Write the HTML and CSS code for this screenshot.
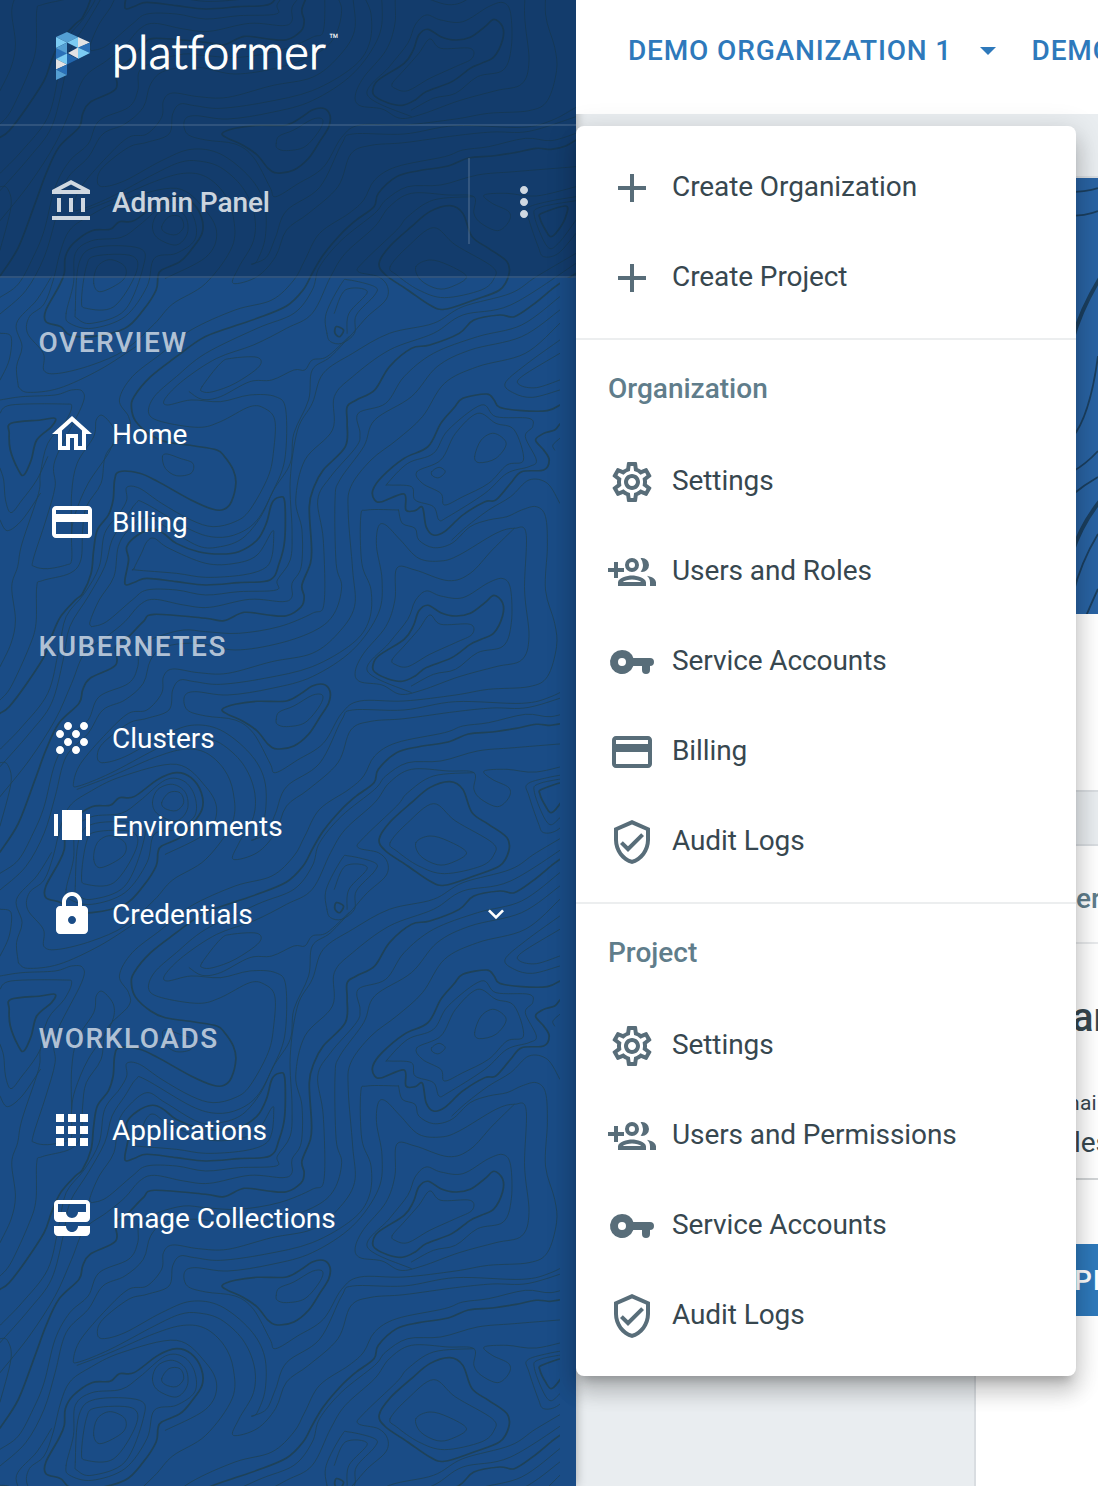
FILE: index.html
```html
<!DOCTYPE html>
<html lang="en">
<head>
<meta charset="utf-8">
<title>Platformer Console</title>
<link rel="stylesheet" href="styles.css">
</head>
<body>
<svg class="sprite" aria-hidden="true">
  <symbol id="i-bank" viewBox="0 0 24 24"><path d="M6.5 10h-2v7h2v-7zm6 0h-2v7h2v-7zm8.5 9H2v2h19v-2zm-2.500-9h-2v7h2v-7zm-7-6.740L16.710 6H6.290l5.210-2.740m0-2.260L2 6v2h19V6l-9.500-5z"/></symbol>
  <symbol id="i-more" viewBox="0 0 24 24"><path d="M12 8c1.100 0 2-.9 2-2s-.9-2-2-2-2 .9-2 2 .9 2 2 2zm0 2c-1.100 0-2 .9-2 2s.9 2 2 2 2-.9 2-2-.9-2-2-2zm0 6c-1.100 0-2 .9-2 2s.9 2 2 2 2-.9 2-2-.9-2-2-2z"/></symbol>
  <symbol id="i-home" viewBox="0 0 24 24"><path d="M12 5.690l5 4.500V18h-2v-6H9v6H7v-7.810l5-4.500M12 3L2 12h3v8h6v-6h2v6h6v-8h3L12 3z"/></symbol>
  <symbol id="i-card" viewBox="0 0 24 24"><path d="M20 4H4c-1.110 0-1.990.89-1.990 2L2 18c0 1.110.89 2 2 2h16c1.110 0 2-.89 2-2V6c0-1.110-.89-2-2-2zm0 14H4v-6h16v6zm0-10H4V6h16v2z"/></symbol>
  <symbol id="i-grain" viewBox="0 0 24 24"><path d="M10 12c-1.100 0-2 .9-2 2s.9 2 2 2 2-.9 2-2-.9-2-2-2zM6 8c-1.100 0-2 .9-2 2s.9 2 2 2 2-.9 2-2-.9-2-2-2zm0 8c-1.100 0-2 .9-2 2s.9 2 2 2 2-.9 2-2-.9-2-2-2zm12-8c1.100 0 2-.9 2-2s-.9-2-2-2-2 .9-2 2 .9 2 2 2zm-4 8c-1.100 0-2 .9-2 2s.9 2 2 2 2-.9 2-2-.9-2-2-2zm4-4c-1.100 0-2 .9-2 2s.9 2 2 2 2-.9 2-2-.9-2-2-2zm-4-4c-1.100 0-2 .9-2 2s.9 2 2 2 2-.9 2-2-.9-2-2-2zm-4-4c-1.100 0-2 .9-2 2s.9 2 2 2 2-.9 2-2-.9-2-2-2z"/></symbol>
  <symbol id="i-carousel" viewBox="0 0 24 24"><path d="M7 19h10V4H7v15zm-4-2h2V6H3v11zM19 6v11h2V6h-2z"/></symbol>
  <symbol id="i-lock" viewBox="0 0 24 24"><path d="M18 8h-1V6c0-2.760-2.240-5-5-5S7 3.240 7 6v2H6c-1.100 0-2 .9-2 2v10c0 1.100.9 2 2 2h12c1.100 0 2-.9 2-2V10c0-1.100-.9-2-2-2zm-6 9c-1.100 0-2-.9-2-2s.9-2 2-2 2 .9 2 2-.9 2-2 2zM9 8V6c0-1.660 1.340-3 3-3s3 1.340 3 3v2H9z"/></symbol>
  <symbol id="i-expand" viewBox="0 0 24 24"><path d="M16.590 8.590L12 13.170 7.410 8.590 6 10l6 6 6-6z"/></symbol>
  <symbol id="i-apps" viewBox="0 0 24 24"><path d="M4 8h4V4H4v4zm6 12h4v-4h-4v4zm-6 0h4v-4H4v4zm0-6h4v-4H4v4zm6 0h4v-4h-4v4zm6-10v4h4V4h-4zm-6 4h4V4h-4v4zm6 6h4v-4h-4v4zm0 6h4v-4h-4v4z"/></symbol>
  <symbol id="i-inbox" viewBox="0 0 24 24"><path d="M19 3H5c-1.100 0-2 .9-2 2v7c0 1.100.9 2 2 2h14c1.100 0 2-.9 2-2V5c0-1.100-.9-2-2-2zm0 6h-4c0 1.620-1.380 3-3 3s-3-1.380-3-3H5V5h14v4zm-4 7h6v3c0 1.100-.9 2-2 2H5c-1.100 0-2-.9-2-2v-3h6c0 1.660 1.340 3 3 3s3-1.340 3-3z"/></symbol>
  <symbol id="i-add" viewBox="0 0 24 24"><path d="M19 13h-6v6h-2v-6H5v-2h6V5h2v6h6v2z"/></symbol>
  <symbol id="i-gear" viewBox="0 0 24 24"><path d="M19.430 12.980c.04-.32.070-.64.070-.98 0-.34-.03-.66-.07-.98l2.110-1.650c.19-.15.240-.42.120-.64l-2-3.460c-.09-.16-.26-.25-.44-.25-.06 0-.12.010-.17.030l-2.490 1c-.52-.4-1.080-.73-1.690-.98l-.38-2.650C14.460 2.180 14.250 2 14 2h-4c-.25 0-.46.180-.49.420l-.38 2.650c-.61.250-1.170.59-1.690.98l-2.490-1c-.06-.02-.12-.03-.18-.03-.17 0-.34.090-.43.250l-2 3.460c-.13.220-.07.490.12.640l2.110 1.650c-.04.320-.07.650-.07.980 0 .33.030.66.070.98l-2.110 1.650c-.19.150-.24.420-.12.640l2 3.460c.09.160.26.250.44.250.06 0 .12-.01.170-.03l2.490-1c.52.4 1.080.73 1.690.98l.38 2.650c.03.240.24.420.49.420h4c.25 0 .46-.18.490-.42l.38-2.650c.61-.25 1.170-.59 1.690-.98l2.490 1c.06.020.12.030.18.030.17 0 .34-.09.430-.25l2-3.460c.12-.22.070-.49-.12-.64l-2.110-1.650zm-1.980-1.710c.04.310.05.520.05.730 0 .21-.02.430-.05.730l-.14 1.130.89.7 1.080.84-.7 1.210-1.270-.51-1.040-.42-.9.680c-.43.320-.84.560-1.250.73l-1.060.43-.16 1.130-.2 1.350h-1.400l-.19-1.350-.16-1.130-1.060-.43c-.43-.18-.83-.41-1.230-.71l-.91-.7-1.060.43-1.270.51-.7-1.210 1.080-.84.890-.7-.14-1.130c-.03-.31-.05-.54-.05-.74s.020-.43.050-.73l.14-1.130-.89-.7-1.080-.84.7-1.210 1.270.51 1.040.42.9-.68c.43-.32.840-.56 1.250-.73l1.060-.43.160-1.130.2-1.350h1.390l.19 1.350.16 1.130 1.060.43c.43.180.83.410 1.230.71l.91.7 1.060-.43 1.270-.51.7 1.210-1.070.85-.89.700.14 1.130zM12 8c-2.210 0-4 1.790-4 4s1.790 4 4 4 4-1.790 4-4-1.790-4-4-4zm0 6c-1.100 0-2-.9-2-2s.9-2 2-2 2 .9 2 2-.9 2-2 2z"/></symbol>
  <symbol id="i-group" viewBox="0 0 24 24"><path fill-rule="evenodd" d="M5 7H3v3H0v2h3v3h2v-3h3v-2H5zM12 5a3.500 3.500 0 1 0 0 7 3.500 3.500 0 0 0 0-7zm0 2a1.500 1.500 0 1 1 0 3 1.500 1.500 0 0 1 0-3zM12 13.750c-2.340 0-7 1.170-7 3.500V19h14v-1.750c0-2.330-4.660-3.500-7-3.500zM7.340 17c.84-.58 2.870-1.250 4.660-1.250s3.820.67 4.660 1.250zM17 12a3.500 3.500 0 0 0 0-7c-.24 0-.48.030-.71.080A5.470 5.470 0 0 1 17.500 8.500c0 1.290-.45 2.480-1.200 3.420.23.050.46.080.7.080zM19.500 13.900c1 .9 1.500 2 1.500 3.350V19h3v-1.750c0-1.800-2.200-2.900-4.500-3.350z"/></symbol>
  <symbol id="i-key" viewBox="0 0 24 24"><path fill-rule="evenodd" d="M7 6a6 6 0 1 0 5.650 8H17v2a2 2 0 0 0 4 0v-2a2 2 0 0 0 0-4h-8.350A6 6 0 0 0 7 6zm0 4a2 2 0 1 1 0 4 2 2 0 0 1 0-4z"/></symbol>
  <symbol id="i-shield" viewBox="0 0 24 24"><path d="M12 1L3 5v6c0 5.550 3.840 10.740 9 12 5.160-1.260 9-6.450 9-12V5l-9-4zm7 10c0 4.520-2.980 8.690-7 9.930-4.020-1.240-7-5.410-7-9.930V6.300l7-3.110 7 3.110V11zm-11.590.59L6 13l4 4 8-8-1.410-1.420L10 14.170z"/></symbol>
</svg>

<div class="app">
  <aside class="sidebar">
    <svg class="contours" aria-hidden="true">
      <defs><g id="terrain"></g></defs>
      <g id="terrain-tiles" transform="scale(.36735 .33333)"></g>
    </svg>
    <div class="sidebar-head">
      <div class="brand">
        <svg class="brand-mark" viewBox="0 0 34 48" aria-hidden="true">
          <path fill="#549fd3" d="M0 5L11 0l11 5-11 5.500z"/>
          <path fill="#7bcbf3" d="M0 5l11 5.500L0 16zM22 5L11 10.500 22 16z"/>
          <path fill="#e2e2e4" d="M22 5l12 5.500L22 16z"/>
          <path fill="#2a70b8" d="M34 10.500V21l-12-5.500z"/>
          <path fill="#549fd3" d="M0 16l11-5.500v11zM0 16v11l11-5.500z"/>
          <path fill="#2a70b8" d="M0 16l11 5.500L0 27z"/>
          <path fill="#e2e2e4" d="M12 21l10-5.500v11z"/>
          <path fill="#7bcbf3" d="M22 15.500L34 21l-12 6z"/>
          <path fill="#7bcbf3" d="M0 27l11-5.500v11z"/>
          <path fill="#2266ad" d="M11 21.500L22 27l-11 5.500z"/>
          <path fill="#e2e2e4" d="M0 27l11 5.500L0 37.500z"/>
          <path fill="#2a70b8" d="M11 32.500v10.500L0 37.500z"/>
          <path fill="#549fd3" d="M0 37.500L11 43 0 48z"/>
        </svg>
        <span class="wordmark">platformer</span><span class="tm">™</span>
      </div>
      <div class="admin">
        <svg class="icon"><use href="#i-bank"/></svg>
        <span class="admin-label">Admin Panel</span>
        <div class="admin-more"><svg class="icon"><use href="#i-more"/></svg></div>
      </div>
    </div>
    <nav class="nav">
      <section>
        <h2>OVERVIEW</h2>
        <a><svg class="icon"><use href="#i-home"/></svg><span>Home</span></a>
        <a><svg class="icon"><use href="#i-card"/></svg><span>Billing</span></a>
      </section>
      <section>
        <h2>KUBERNETES</h2>
        <a><svg class="icon"><use href="#i-grain"/></svg><span>Clusters</span></a>
        <a><svg class="icon"><use href="#i-carousel"/></svg><span>Environments</span></a>
        <a><svg class="icon"><use href="#i-lock"/></svg><span>Credentials</span><svg class="chevron"><use href="#i-expand"/></svg></a>
      </section>
      <section>
        <h2>WORKLOADS</h2>
        <a><svg class="icon"><use href="#i-apps"/></svg><span>Applications</span></a>
        <a><svg class="icon"><use href="#i-inbox"/></svg><span>Image Collections</span></a>
      </section>
    </nav>
  </aside>

  <main class="main">
    <header class="topbar">
      <span>DEMO ORGANIZATION 1</span>
      <svg class="caret" viewBox="0 0 16 8"><path d="M0 0h16L8 8z"/></svg>
      <span>DEMO</span>
    </header>
    <div class="content">
      <article class="card">
        <svg class="hero" viewBox="0 0 122 436" aria-hidden="true">
          <path d="M90 14q20 0 32-4M90 38q20 0 32-5"/>
          <path class="bold" d="M96 163q9-32 28-63M96 375q9-28 28-52"/>
          <path d="M96 260q18-22 26-82M96 294q14-8 26-21M96 317q12-10 26-18M97 416q8-32 25-60M110 438q6-14 12-27"/>
        </svg>
        <div class="card-foot"></div>
      </article>
      <article class="card details">
        <h3>er</h3>
        <div class="field-title">ar</div>
        <div class="field"><small>nai</small><span>les</span></div>
        <button>PI</button>
      </article>
    </div>
  </main>

  <div class="menu">
    <div class="group">
      <a><svg class="icon"><use href="#i-add"/></svg>Create Organization</a>
      <a><svg class="icon"><use href="#i-add"/></svg>Create Project</a>
    </div>
    <div class="group">
      <h4>Organization</h4>
      <a><svg class="icon"><use href="#i-gear"/></svg>Settings</a>
      <a><svg class="icon"><use href="#i-group"/></svg>Users and Roles</a>
      <a><svg class="icon"><use href="#i-key"/></svg>Service Accounts</a>
      <a><svg class="icon"><use href="#i-card"/></svg>Billing</a>
      <a><svg class="icon"><use href="#i-shield"/></svg>Audit Logs</a>
    </div>
    <div class="group">
      <h4>Project</h4>
      <a><svg class="icon"><use href="#i-gear"/></svg>Settings</a>
      <a><svg class="icon"><use href="#i-group"/></svg>Users and Permissions</a>
      <a><svg class="icon"><use href="#i-key"/></svg>Service Accounts</a>
      <a><svg class="icon"><use href="#i-shield"/></svg>Audit Logs</a>
    </div>
  </div>
</div>
<script src="contours.js"></script>
</body>
</html>
```
FILE: styles.css
```css
* { box-sizing: border-box; }
body {
  margin: 0;
  font: 28px/42px Roboto, "Liberation Sans", sans-serif;
  letter-spacing: -.09px;
  color: #37474f;
  overflow: hidden;
}
h2, h3, h4 { margin: 0; font-size: 28px; font-weight: 500; }
.sprite { display: none; }
.icon { width: 48px; height: 48px; fill: currentColor; flex: none; }
.app { position: relative; display: grid; grid-template-columns: 576px 1fr; height: 1486px; overflow: hidden; }

/* Sidebar */
.sidebar { position: relative; background: #1a4c86; color: #fff; box-shadow: 0 0 10px rgba(0,0,0,.3); }
.contours { position: absolute; inset: 0; width: 576px; height: 1486px; fill: none; stroke: #1e4259; stroke-width: 2.500; stroke-linecap: round; }
.contours .index { stroke-width: 4.800; }
.sidebar-head { position: relative; background: rgba(11,42,77,.45); color: rgba(255,255,255,.8); }
.brand { display: flex; align-items: flex-start; height: 126px; padding: 32px 0 0 56px; border-bottom: 2px solid rgba(255,255,255,.12); }
.brand-mark { width: 34px; height: 48px; }
.wordmark { margin: -7px 0 0 22px; font: 300 47px/52px Lato, sans-serif; letter-spacing: .2px; font-variant-ligatures: none; color: #fff; -webkit-text-stroke: 1.200px #fff; }
.tm { margin: 1px 0 0 3px; font-size: 16px; line-height: 14px; letter-spacing: 0; color: #fff; }
.admin { display: flex; align-items: center; height: 152px; padding: 2px 0 0 48px; border-bottom: 2px solid rgba(255,255,255,.12); }
.admin-label { margin-left: 16px; padding-top: 2px; font-weight: 500; letter-spacing: -.1px; }
.admin-more { display: flex; align-items: center; height: 86px; margin: -2px 0 0 auto; padding: 2px 28px 0 30px; border-left: 2px solid rgba(255,255,255,.14); }
.nav { position: relative; padding-right: 16px; letter-spacing: -.02px; }
.nav::after { content: ""; position: absolute; top: 0; right: 0; width: 16px; height: 1208px; background: #1a4c86; }
.nav section { padding-top: 32px; }
.nav section:first-child { padding-top: 16px; }
.nav h2 { height: 96px; padding-left: 38.500px; line-height: 98px; letter-spacing: 1.550px; color: rgba(255,255,255,.68); }
.nav a { display: flex; align-items: center; gap: 16px; height: 88px; padding: 0 48px; }
.nav a span { padding-top: 2px; }
.chevron { width: 32px; height: 32px; margin-left: auto; fill: currentColor; }

/* Main area */
.main { display: flex; flex-direction: column; background: #e9edf0; }
.topbar { display: flex; align-items: center; height: 114px; padding: 0 0 12px 52px; background: #fff; color: #2e79bb; font-weight: 500; letter-spacing: .840px; white-space: nowrap; position: relative; }
.caret { width: 16px; height: 8px; margin: 0 35.500px 0 28px; fill: currentColor; flex: none; }
.content { display: flex; flex-direction: column; gap: 56px; padding: 64px 0 0 400px; flex: 1; }
.card { background: #fff; box-shadow: 0 0 0 2px #d9dde1; }
.hero { display: block; width: 122px; height: 436px; background: #2963a3; fill: none; stroke: #1b3f5f; stroke-width: 1.800; }
.hero .bold { stroke-width: 4; }
.card-foot { height: 176px; }
.details { flex: 1; white-space: nowrap; overflow: hidden; }
.details h3 { height: 98px; padding-left: 100px; line-height: 106px; color: #607d8b; border-bottom: 2px solid #e8eaec; }
.field-title { padding: 46px 0 0 96px; font-size: 40px; line-height: 56px; font-weight: 500; }
.field { display: flex; flex-direction: column; height: 134px; padding: 45px 0 0 92px; border-bottom: 2px solid #d2d5d7; }
.field small { font-size: 21px; line-height: 24px; letter-spacing: .3px; }
.field span { padding-left: 6px; margin-top: 7px; }
.details button { display: block; width: 122px; height: 72px; margin-top: 64px; padding: 0 0 0 98px; border: 0; background: #2e79bb; color: #fff; font: 500 28px Roboto, sans-serif; letter-spacing: .84px; text-align: left; }

/* Options menu */
.menu { position: absolute; left: 576px; top: 126px; width: 500px; background: #fff; border-radius: 8px; box-shadow: 0 10px 10px -6px rgba(0,0,0,.2), 0 16px 20px 2px rgba(0,0,0,.14), 0 6px 28px 4px rgba(0,0,0,.12); }
.group { padding-bottom: 16px; }
.group:first-child { padding-top: 16px; }
.group + .group { border-top: 2px solid #eceeef; }
.group h4 { height: 96px; padding-left: 32px; line-height: 98px; letter-spacing: 0; color: #607d8b; }
.group a { display: flex; align-items: center; gap: 16px; height: 90px; padding-left: 32px; }
.group .icon { margin-top: 2px; color: #586d79; }
```
FILE: contours.js
```js
// Elevation lines of one terrain tile; the tile repeats every TILE units down the sidebar.
const TILE = 1728;
const index = [
  "1568,420 1540,438 1500,448 1460,445 1400,458 1340,468 1275,474 1220,498 1140,512 1080,530 1030,580 1018,620 970,660 930,700 880,765 850,820 825,870 780,918 700,955 620,985 550,1015 480,1070 410,1130 365,1190 358,1225 370,1265 410,1305 450,1325 530,1338 590,1350 610,1368 635,1410 642,1450 630,1505 610,1528 580,1528 520,1500 430,1445 380,1420 325,1415 312,1440 308,1500 295,1545 265,1590 255,1650 248,1720 225,1780 205,1800 165,1850 140,1910 120,1970 70,2055 25,2120 0,2140",
  "345,1640 375,1605 415,1588 445,1600 480,1630 540,1655 600,1662 650,1655 700,1620 725,1570 740,1510 760,1492 775,1505 775,1620 760,1690 735,1740 650,1748 560,1755 480,1745 400,1735 370,1745 345,1755 340,1740 350,1680 z",
  "1568,820 1524,850 1500,870 1450,915 1400,950 1360,945 1290,960 1250,1000 1170,1035 1120,1045 1060,1100 1020,1170 970,1200 945,1220 945,1270 940,1340 880,1410 855,1460 842,1520 848,1640 845,1690 822,1755 828,1790 820,1820 780,1847 730,1845 665,1837 610,1862 560,1855 420,1843 390,1865 350,1910 315,1940 315,1995 245,2035 225,2070 215,2110 160,2170 125,2250 95,2340 50,2470 0,2556",
  "605,400 640,385 700,376 780,375 820,352 850,330 880,325 898,345 895,380 870,425 840,475 800,510 755,519 730,505 700,465 660,435 620,415 z",
  "1015,270 1030,240 1100,190 1125,150 1140,105 1165,88 1200,110 1240,120 1280,112 1320,80 1345,58 1368,80 1368,120 1345,170 1310,190 1280,205 1230,245 1160,275 1130,300 1095,316 1055,308 1020,288 z",
  "430,830 425,870 390,930 340,985 250,1010 190,1005 165,980 125,965 125,930 160,860 175,820 178,770 200,730 250,692 300,688 325,665 365,662 430,610 480,590 520,605 548,650 550,700 520,750 490,785 440,810 z",
  "1032,790 1060,740 1120,680 1170,635 1225,617 1260,640 1285,710 1330,745 1380,785 1385,825 1360,870 1290,900 1210,928 1170,915 1110,870 1050,825 z",
  "1475,640 1540,618 1540,650 1520,690 1500,710 1485,690 1470,655 z",
  "915,980 935,990 925,1010 912,1000 z",
  "1524,1215 1490,1232 1420,1232 1360,1222 1345,1200 1325,1182 1260,1195 1235,1225 1200,1270 1165,1340 1100,1375 1040,1430 1015,1470 1020,1500 1040,1505 1100,1482 1105,1530 1130,1532 1150,1522 1160,1580 1180,1605 1210,1595 1260,1545 1320,1505 1350,1500 1390,1450 1420,1415 1480,1410 1495,1380 1480,1350 1458,1320 1480,1300 1510,1290 1524,1272",
  "30,1270 110,1260 150,1255 140,1280 100,1320 85,1380 65,1425 50,1410 28,1350 25,1300 z"
];
const minor = [
  "0,1240 30,1215 170,1212 195,1220 175,1270 130,1330 110,1420 105,1480 60,1630 48,1700 32,1760 42,1860 30,1930 0,2000",
  "0,1200 60,1190 150,1185 195,1170 225,1175 222,1220 150,1380 150,1460 125,1560 90,1680 95,1700 130,1706 180,1695 195,1680 195,1600 205,1540 240,1450 300,1350 310,1290 280,1247 262,1260 255,1310 210,1390 195,1480 195,1600",
  "0,2100 30,2060 80,1940 98,1870 100,1760 115,1742 190,1720 220,1680 225,1590 235,1520 275,1450 290,1360 350,1290 350,1250 325,1200 360,1130 440,1060 520,990 640,930 740,900 800,840 830,780 870,700 950,640 990,600 1020,540 1080,500 1210,470 1260,450 1330,440 1430,415 1500,422 1568,400",
  "0,2248 60,2180 130,2080 160,1950 180,1850 230,1780 270,1700 285,1600 325,1540 345,1500 345,1462 380,1465 440,1510 520,1560 580,1580 640,1565 680,1530 730,1430 745,1350 748,1260 720,1225 680,1220 600,1265 540,1282 440,1265 405,1240 420,1190 480,1130 560,1060 700,985 800,940 850,870 870,800 930,720 1020,640 1050,600 1110,560 1200,555 1300,525 1400,515 1568,500",
  "0,2300 80,2200 140,2110 172,1980 190,1880 240,1790 285,1700 305,1620 340,1560 370,1510 395,1510 520,1590 590,1612 650,1600 700,1560 740,1480 775,1380 778,1230 750,1190 680,1185 600,1205 520,1200 455,1215 450,1195 500,1140 590,1075 690,1035 780,985 850,940 900,830 940,760 1020,680 1060,620 1120,580 1220,585 1290,590 1290,640 1310,670 1355,692 1385,665 1385,635 1340,610 1318,585 1380,580 1460,588 1568,560",
  "250,1880 245,1865 270,1800 310,1730 322,1640 350,1590 400,1550 450,1580 540,1638 600,1640 660,1615 710,1550 745,1470 790,1390 800,1300 840,1200 850,1110 900,1070 960,1000 1000,950 1050,900 1055,860 1030,830 975,815 990,785 1080,690 1110,650 1180,600 1290,590",
  "365,1705 385,1660 400,1625 420,1615 460,1645 560,1690 640,1690 700,1665 740,1595 745,1610 740,1670 720,1705 660,1725 560,1732 480,1720 370,1710 z",
  "250,1880 290,1865 360,1800 400,1770 480,1770 560,1785 650,1775 752,1770 755,1740 790,1680 795,1590 790,1440 810,1290 850,1210 880,1120 960,1060 1060,1000 1180,970 1260,920 1390,880 1460,830 1568,760",
  "0,2390 80,2280 150,2160 195,2050 230,1960 290,1910 340,1865 380,1815 420,1798 500,1815 570,1822 680,1798 770,1805 795,1790 795,1750 820,1700 822,1590 805,1500 830,1380 905,1290 910,1190 960,1130 1060,1050 1180,1000 1260,945 1390,915 1568,790",
  "1524,890 1420,975 1300,1010 1180,1060 1100,1130 1050,1210 975,1240 980,1300 970,1340 900,1430 865,1500 880,1620 882,1810 850,1840 760,1880 650,1900 560,1895 500,1890 430,1910 380,1940 375,2000 350,2050 270,2090 240,2160 190,2210 150,2290 120,2420 90,2500 50,2580 0,2620",
  "1524,930 1420,1010 1280,1050 1190,1100 1120,1190 1020,1260 990,1340 925,1440 912,1500 915,1690 930,1760 910,1840 860,1890 760,1930 640,1950 540,1930 450,1940 410,1980 390,2050 340,2100 280,2130 240,2200 180,2270 150,2390 120,2500 70,2600 0,2670",
  "1524,970 1430,1060 1300,1100 1210,1150 1150,1250 1080,1320 1010,1380 955,1460 948,1540 960,1710 965,1820 920,1900 850,1960 740,1985 620,2020 540,2018 470,2007 445,2030 440,2080 400,2130 350,2140 290,2200 220,2290 200,2350 215,2358 300,2320 420,2250 490,2215 540,2211 600,2230 660,2290 692,2370 690,2450 650,2530 635,2578 700,2558 750,2498 780,2418 840,2368 920,2288 955,2190 1010,2164 1100,2156 1240,2135 1340,2124 1440,2122 1568,2078",
  "210,640 300,602 420,545 500,520 560,530 610,580 635,650 632,740 560,850 470,912 420,972 340,1050 250,1095 160,1120 120,1112 118,1060 75,1000 80,950 120,912 145,840 165,752 190,690 240,650 330,602 480,565 560,632 590,702 560,772 450,835",
  "1085,1530 1000,1530 982,1550 985,1690 1010,1770 1005,1860 960,1930 850,2000 720,2035 600,2053 530,2045 490,2040 470,2070 460,2130 400,2155 350,2170 280,2230 265,2270 280,2288 340,2270 440,2210 520,2176 600,2190 680,2260 720,2340 722,2440 700,2510 685,2520 725,2500 750,2440 780,2360 870,2290 930,2160 960,2130 1100,2130 1240,2105 1420,2110 1500,2090 1568,2050",
  "1085,1530 1095,1570 1130,1585 1140,1620 1180,1643 1230,1630 1280,1580 1330,1560 1380,1550 1420,1530 1460,1520 1485,1550 1490,1640 1485,1770 1510,1870 1515,1940 1490,2030 1440,2060 1330,2068 1240,2085 1100,2103 980,2103 930,2140 880,2230 810,2280 750,2318 735,2290 690,2200 640,2160 560,2148 510,2130 502,2090 530,2075 620,2085 740,2065 850,2030 960,1950 1030,1840 1040,1740 1025,1640 1030,1580 1050,1575 1090,1620 1140,1675 1200,1683 1250,1665 1350,1600 1400,1585 1432,1600 1428,1770 1440,1910 1420,1980 1350,2000 1250,2030 1150,2070 1090,2083 1040,2055 980,2045 967,2015 990,1960 1050,1880 1075,1800 1080,1705 1130,1710 1220,1742 1280,1720 1340,1650 1400,1585",
  "1120,350 1000,285 1060,200 1110,130 1130,75 1160,45 1200,60 1260,65 1330,20 1370,8 1390,40 1392,140 1370,210 1300,230 1240,280 1180,295 1120,330",
  "1068,250 1100,210 1140,160 1170,117 1200,145 1280,145 1285,175 1240,200 1170,235 1110,272 1075,265 z",
  "752,430 760,408 800,390 850,358 878,358 870,390 830,440 780,452 755,445 z",
  "440,680 460,650 490,650 500,680 480,704 450,698 z",
  "415,680 430,640 470,625 505,650 510,700 480,735 430,715 z",
  "255,850 265,800 300,779 340,800 335,840 275,875 z",
  "222,900 235,800 260,768 360,768 370,820 310,920 235,925 z",
  "205,930 215,790 260,742 380,745 390,800 340,930 250,970 210,955 z",
  "180,940 200,850 205,760 250,722 330,712 380,675 450,612 500,615 530,660 530,720 480,760 420,775 400,860 340,950 250,985 190,970 z",
  "1062,800 1110,740 1180,683 1240,735 1340,800 1345,835 1310,870 1210,893 1140,870 1080,825 z",
  "1132,800 1170,780 1220,795 1270,830 1230,860 1190,866 1145,840 z",
  "1568,700 1520,760 1480,770 1465,740 1440,660 1435,625 1490,605 1568,590",
  "1568,660 1520,730 1490,740 1455,650 1470,622 1568,602",
  "890,1000 888,940 930,850 950,840 1020,860 1020,885 970,945 965,1000 930,1030 900,1025 z",
  "910,940 940,870 1000,875 950,940 945,1000",
  "1292,1370 1310,1320 1345,1300 1378,1330 1350,1375 1305,1388 z",
  "1175,1415 1195,1402 1212,1415 1195,1433 1178,1428 z",
  "1055,1450 1110,1390 1180,1360 1220,1290 1310,1215 1350,1250 1440,1255 1450,1280 1430,1310 1460,1380 1440,1400 1380,1420 1320,1480 1220,1550 1195,1560 1180,1520 1130,1500 1120,1460 1060,1455 z",
  "1135,1415 1200,1380 1240,1300 1300,1240 1350,1270 1400,1290 1425,1380 1380,1395 1330,1450 1260,1490 1210,1515 1200,1480 1150,1450 z",
  "1524,1020 1430,1095 1375,1150 1400,1180 1450,1192 1524,1170",
  "1524,1060 1420,1130 1415,1155 1460,1163 1524,1140",
  "1524,1510 1490,1450 1440,1440 1390,1490 1330,1530 1270,1580 1230,1620",
  "0,560 20,565 30,620 0,750",
  "0,1000 30,1010 25,1080 0,1140",
  "50,1160 45,1100 60,1040 45,970 100,900 140,830",
  "50,1160 75,1177 160,1165 270,1110 370,1040",
  "550,1160 600,1090 630,1075 700,1072 705,1100 640,1150 580,1175 552,1175 z",
  "515,1175 550,1198 600,1190 680,1145 740,1140 800,1110 830,1110 850,1080 890,1070 950,1010",
  "442,1370 455,1362 490,1375 525,1390 520,1420 480,1427 450,1405 z",
  "0,1405 10,1440 15,1500 30,1538 60,1500 100,1440 130,1370",
  "0,1560 20,1592 60,1560 110,1480",
  "1510,1350 1505,1335 1524,1315"
];

// Smooths a list of "x,y" pairs into a cubic path (Catmull-Rom).
function toPath(line) {
  const closed = line.endsWith("z");
  const pts = line.replace(" z", "").split(" ").map(p => p.split(",").map(Number));
  const n = pts.length;
  const at = i => closed ? pts[(i + n) % n] : pts[Math.max(0, Math.min(n - 1, i))];
  let d = "M" + pts[0];
  for (let i = 0; i < (closed ? n : n - 1); i++) {
    const [a, b, c, e] = [at(i - 1), at(i), at(i + 1), at(i + 2)];
    d += "C" + [b[0] + (c[0] - a[0]) / 6, b[1] + (c[1] - a[1]) / 6,
      c[0] - (e[0] - b[0]) / 6, c[1] - (e[1] - b[1]) / 6, c[0], c[1]].join(" ");
  }
  return d;
}

document.getElementById("terrain").innerHTML =
  `<path d="${minor.map(toPath).join("")}"/><path class="index" d="${index.map(toPath).join("")}"/>`;
let tiles = "";
for (let k = -2; k < 3; k++) tiles += `<use href="#terrain" y="${k * TILE}"/>`;
document.getElementById("terrain-tiles").innerHTML = tiles;
```
